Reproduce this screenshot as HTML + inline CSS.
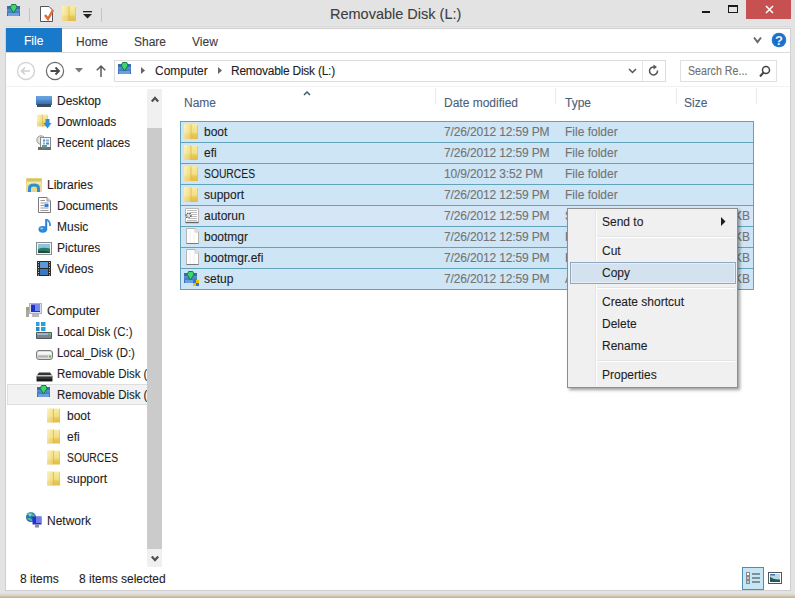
<!DOCTYPE html>
<html><head><meta charset="utf-8">
<style>
*{margin:0;padding:0;box-sizing:border-box}
html,body{-webkit-text-stroke:0.1px;width:795px;height:598px;overflow:hidden;background:#e3e3e3;font-family:"Liberation Sans",sans-serif;font-size:12px;color:#1e1e1e}
.a{position:absolute;white-space:nowrap}
svg.a{overflow:visible}
.t{position:absolute;white-space:nowrap;line-height:14px}
.sel{position:absolute;left:180px;width:574px;height:22px;background:#cde5f5;border:1px solid #62a3bb}
.g{color:#737373}
.h{color:#4c607a}
.nav{position:absolute;white-space:nowrap;line-height:14px;color:#1e1e1e}
.mi{position:absolute;left:602px;line-height:14px;color:#1e1e1e}
</style></head><body>
<svg width="0" height="0" style="position:absolute">
<defs>
<linearGradient id="fg1" x1="0" x2="0" y1="0" y2="1"><stop offset="0" stop-color="#f7eca0"/><stop offset=".55" stop-color="#f2de84"/><stop offset=".7" stop-color="#e8c958"/><stop offset="1" stop-color="#e2bd48"/></linearGradient>
<linearGradient id="fg2" x1="0" x2="1" y1="0" y2="0"><stop offset="0" stop-color="#fffbe0"/><stop offset="1" stop-color="#f0d878"/></linearGradient>
<linearGradient id="bl" x1="0" x2="0" y1="0" y2="1"><stop offset="0" stop-color="#6aa6e0"/><stop offset="1" stop-color="#2f68b8"/></linearGradient>
<symbol id="folder" viewBox="0 0 14 15">
  <rect x="0" y="0" width="14" height="15" fill="url(#fg1)"/>
  <rect x="0" y="0" width="7" height="15" fill="url(#fg2)" opacity=".5"/>
  <rect x="6.5" y="0.5" width="1" height="14.5" fill="#d8b850" opacity=".8"/>
  <rect x="13" y="1" width="1" height="14" fill="#e0c060" opacity=".7"/>
</symbol>
<symbol id="drvL" viewBox="0 0 14 13">
  <rect x="0" y="2" width="13" height="10" fill="url(#bl)"/>
  <rect x="0" y="2" width="13" height="3" fill="#3a6cb0"/>
  <rect x="1" y="9" width="11" height="3" fill="#6aa0e0"/>
  <path d="M3.2 3.5L6.5 9L10 3.5L8.8 0.5H4.6Z" fill="#3ad86c" stroke="#1a6a3c" stroke-width="0.9"/>
</symbol>
<symbol id="page" viewBox="0 0 14 16">
  <path d="M1.5 0.5H10L13.5 4V15.5H1.5Z" fill="#fff" stroke="#b4b4b4"/>
  <path d="M10 0.5V4H13.5" fill="#f0f0f0" stroke="#c8c8c8"/>
  <path d="M1.5 15.5H13.5" stroke="#7a7a7a"/>
  <path d="M5 2V15M9 2V15" stroke="#f4eeee"/>
</symbol>
</defs>
</svg>

<!-- title bar -->
<svg class="a" style="left:7px;top:4px" width="14" height="13"><use href="#drvL"/></svg>
<div class="a" style="left:29px;top:8px;width:1px;height:14px;background:#c4c4c4"></div>
<svg class="a" style="left:40px;top:6px" width="15" height="16"><path d="M0.5 0.5H9L12.5 4V15.5H0.5Z" fill="#fff" stroke="#555"/><path d="M5 9 L8 13 L13 4" stroke="#e06a3a" stroke-width="2.5" fill="none"/></svg>
<svg class="a" style="left:62px;top:5px" width="14" height="17"><use href="#folder" width="14" height="17"/></svg>
<svg class="a" style="left:83px;top:11px" width="9" height="8"><rect x="0" y="0" width="9" height="1.3" fill="#222"/><path d="M0 3H9L4.5 7.5Z" fill="#222"/></svg>
<div class="a" style="left:101px;top:8px;width:1px;height:14px;background:#c4c4c4"></div>

<div class="a" style="left:330px;top:5px;font-size:14.5px;color:#3d3d3d;line-height:18px">Removable Disk (L:)</div>
<!-- window buttons -->
<div class="a" style="left:702px;top:11px;width:8px;height:2px;background:#1a1a1a"></div>
<div class="a" style="left:728px;top:5px;width:10px;height:8px;border:1px solid #1a1a1a;border-top-width:2px"></div>
<div class="a" style="left:746px;top:0;width:45px;height:19px;background:#c75050"></div>
<svg class="a" style="left:765px;top:5px" width="9" height="9"><path d="M1 1L8 8M8 1L1 8" stroke="#fff" stroke-width="1.5"/></svg>

<!-- white window content -->
<div class="a" style="left:5px;top:26px;width:786px;height:1px;background:#d8d8d8"></div>
<div class="a" style="left:5px;top:25px;width:786px;height:1px;background:#e6e6e6"></div>
<div class="a" style="left:5px;top:27px;width:786px;height:1px;background:#e8e8e8"></div>
<div class="a" style="left:5px;top:28px;width:786px;height:563px;background:#fff;border:1px solid #cfcfcf"></div>

<!-- ribbon tabs -->
<div class="a" style="left:6px;top:28px;width:56px;height:24px;background:#1979ca"></div>
<div class="t" style="left:24px;top:34px;color:#fff">File</div>
<div class="t" style="left:76px;top:35px;color:#3c3c3c">Home</div>
<div class="t" style="left:134px;top:35px;color:#3c3c3c">Share</div>
<div class="t" style="left:192px;top:35px;color:#3c3c3c">View</div>
<div class="a" style="left:6px;top:52px;width:785px;height:1px;background:#dadbdc"></div>
<svg class="a" style="left:753px;top:36px" width="9" height="8"><path d="M1 1.5L4.5 6L8 1.5" stroke="#6a6a6a" stroke-width="2" fill="none"/></svg>
<svg class="a" style="left:771px;top:32px" width="16" height="16"><circle cx="8" cy="8" r="7.3" fill="#1c6cc4"/><circle cx="8" cy="8" r="6.3" fill="none" stroke="#2a80d8" stroke-width="1"/><text x="8" y="12.8" font-size="13" font-weight="bold" text-anchor="middle" fill="#e8f4ff" font-family="Liberation Sans">?</text></svg>

<!-- address bar -->
<svg class="a" style="left:16px;top:61px" width="20" height="20"><circle cx="10" cy="10" r="8.5" fill="none" stroke="#d4d4d4" stroke-width="1.4"/><path d="M14 10H6M9 6.5L5.5 10L9 13.5" stroke="#d0d0d0" stroke-width="1.6" fill="none"/></svg>
<svg class="a" style="left:45px;top:61px" width="20" height="20"><circle cx="10" cy="10" r="8.6" fill="none" stroke="#6a6a6a" stroke-width="1.2"/><path d="M5.5 10H13.5M10.5 6.5L14 10L10.5 13.5" stroke="#4a4a4a" stroke-width="1.8" fill="none"/></svg>
<svg class="a" style="left:75px;top:68px" width="8" height="5"><path d="M0 0H8L4 4.5Z" fill="#777"/></svg>
<svg class="a" style="left:95px;top:64px" width="12" height="14"><path d="M6 13V2M1.8 6.2L6 2L10.2 6.2" stroke="#5a5a5a" stroke-width="1.5" fill="none"/></svg>
<div class="a" style="left:114px;top:60px;width:552px;height:22px;border:1px solid #dcdcdc"></div>
<svg class="a" style="left:118px;top:62px" width="14" height="13"><use href="#drvL"/></svg>
<svg class="a" style="left:141px;top:67px" width="4" height="7"><path d="M0 0L4 3.5L0 7Z" fill="#666"/></svg>
<div class="t" style="left:155px;top:64px">Computer</div>
<svg class="a" style="left:218px;top:67px" width="4" height="7"><path d="M0 0L4 3.5L0 7Z" fill="#666"/></svg>
<div class="t" style="left:231px;top:64px;letter-spacing:-0.25px">Removable Disk (L:)</div>
<svg class="a" style="left:628px;top:68px" width="9" height="6"><path d="M1 1L4.5 4.5L8 1" stroke="#555" stroke-width="1.5" fill="none"/></svg>
<div class="a" style="left:642px;top:61px;width:1px;height:20px;background:#e6e6e6"></div>
<svg class="a" style="left:648px;top:64px" width="12" height="14"><path d="M9.5 6.5A4 4 0 1 1 6 3" stroke="#555" stroke-width="1.5" fill="none"/><path d="M5.5 0.5L9 3L5.5 5.5Z" fill="#555"/></svg>
<div class="a" style="left:680px;top:60px;width:97px;height:22px;border:1px solid #e0e0e0"></div>
<div class="t" style="left:688px;top:64px;color:#707070;transform:scaleX(0.89);transform-origin:0 0">Search Re...</div>
<svg class="a" style="left:759px;top:65px" width="12" height="13"><circle cx="7" cy="5" r="3.5" fill="none" stroke="#444" stroke-width="1.5"/><path d="M4.5 7.5L1 11.5" stroke="#444" stroke-width="2"/></svg>

<!-- header -->
<div class="t h" style="left:184px;top:96px">Name</div>
<svg class="a" style="left:303px;top:90px" width="8" height="6"><path d="M1 5L4 2L7 5" stroke="#3f5866" stroke-width="1.5" fill="none"/></svg>
<div class="a" style="left:6px;top:86px;width:784px;height:1px;background:#f2f2f2"></div>
<div class="a" style="left:435px;top:88px;width:1px;height:16px;background:#ebebeb"></div>
<div class="t h" style="left:444px;top:96px">Date modified</div>
<div class="a" style="left:555px;top:88px;width:1px;height:16px;background:#ebebeb"></div>
<div class="t h" style="left:565px;top:96px">Type</div>
<div class="a" style="left:676px;top:88px;width:1px;height:16px;background:#ebebeb"></div>
<div class="t h" style="left:684px;top:96px">Size</div>
<div class="a" style="left:756px;top:88px;width:1px;height:16px;background:#ebebeb"></div>

<!-- rows -->
<div class="sel" style="top:121px"></div>
<div class="sel" style="top:142px"></div>
<div class="sel" style="top:163px"></div>
<div class="sel" style="top:184px"></div>
<div class="sel" style="top:205px;background:#d5e6f7"></div>
<div class="sel" style="top:226px"></div>
<div class="sel" style="top:247px"></div>
<div class="sel" style="top:268px"></div>

<svg class="a" style="left:184px;top:124px" width="14" height="15"><use href="#folder"/></svg>
<svg class="a" style="left:184px;top:145px" width="14" height="15"><use href="#folder"/></svg>
<svg class="a" style="left:184px;top:166px" width="14" height="15"><use href="#folder"/></svg>
<svg class="a" style="left:184px;top:187px" width="14" height="15"><use href="#folder"/></svg>
<svg class="a" style="left:184px;top:208px" width="16" height="16"><path d="M1.5 0.5H14.5V14.5H1.5Z" fill="#fff" stroke="#b8b8b8"/><path d="M3 2.5H13M6 4.5H13M7 6.5H13M7 8.5H13M6 10.5H13M3 12.5H13" stroke="#bcbcbc"/><path d="M1.5 14.5H14.5" stroke="#666" stroke-width="1.4"/><circle cx="4.5" cy="7.5" r="2.4" fill="#ddd" stroke="#555" stroke-width="1.4" stroke-dasharray="1.3 0.9"/></svg>
<svg class="a" style="left:185px;top:228px" width="14" height="16"><use href="#page"/></svg>
<svg class="a" style="left:185px;top:249px" width="14" height="16"><use href="#page"/></svg>
<svg class="a" style="left:184px;top:270px" width="15" height="16"><use href="#drvL" width="14" height="13" y="1"/><rect x="9" y="10" width="6" height="6" fill="#f0c000"/><rect x="9" y="10" width="3" height="3" fill="#2a7ad0"/><rect x="12" y="13" width="3" height="3" fill="#2a7ad0"/></svg>

<div class="t" style="left:204px;top:125px">boot</div>
<div class="t" style="left:204px;top:146px">efi</div>
<div class="t" style="left:204px;top:167px;transform:scaleX(0.86);transform-origin:0 0">SOURCES</div>
<div class="t" style="left:204px;top:188px">support</div>
<div class="t" style="left:204px;top:209px">autorun</div>
<div class="t" style="left:204px;top:230px">bootmgr</div>
<div class="t" style="left:204px;top:251px">bootmgr.efi</div>
<div class="t" style="left:204px;top:272px">setup</div>

<div class="t g" style="left:444px;top:125px;letter-spacing:-0.15px">7/26/2012 12:59 PM</div>
<div class="t g" style="left:444px;top:146px;letter-spacing:-0.15px">7/26/2012 12:59 PM</div>
<div class="t g" style="left:444px;top:167px;letter-spacing:-0.15px">10/9/2012 3:52 PM</div>
<div class="t g" style="left:444px;top:188px;letter-spacing:-0.15px">7/26/2012 12:59 PM</div>
<div class="t g" style="left:444px;top:209px;letter-spacing:-0.15px">7/26/2012 12:59 PM</div>
<div class="t g" style="left:444px;top:230px;letter-spacing:-0.15px">7/26/2012 12:59 PM</div>
<div class="t g" style="left:444px;top:251px;letter-spacing:-0.15px">7/26/2012 12:59 PM</div>
<div class="t g" style="left:444px;top:272px;letter-spacing:-0.15px">7/26/2012 12:59 PM</div>

<div class="t g" style="left:565px;top:125px">File folder</div>
<div class="t g" style="left:565px;top:146px">File folder</div>
<div class="t g" style="left:565px;top:167px">File folder</div>
<div class="t g" style="left:565px;top:188px">File folder</div>
<div class="t g" style="left:565px;top:209px">S</div>
<div class="t g" style="left:565px;top:230px">F</div>
<div class="t g" style="left:565px;top:251px">E</div>
<div class="t g" style="left:565px;top:272px">A</div>
<div class="t g" style="left:734px;top:209px">KB</div>
<div class="t g" style="left:734px;top:230px">KB</div>
<div class="t g" style="left:734px;top:251px">KB</div>
<div class="t g" style="left:734px;top:272px">KB</div>

<!-- nav pane -->
<div class="a" style="left:6px;top:88px;width:141px;height:480px;overflow:hidden">
<div class="a" style="left:1px;top:296px;width:150px;height:21px;background:#f2f2f2;border:1px solid #dedede"></div>
<div class="nav" style="left:51px;top:6px">Desktop</div>
<div class="nav" style="left:51px;top:27px">Downloads</div>
<div class="nav" style="left:51px;top:48px;transform:scaleX(0.96);transform-origin:0 0">Recent places</div>
<div class="nav" style="left:41px;top:90px">Libraries</div>
<div class="nav" style="left:51px;top:111px">Documents</div>
<div class="nav" style="left:51px;top:132px">Music</div>
<div class="nav" style="left:51px;top:153px">Pictures</div>
<div class="nav" style="left:51px;top:174px">Videos</div>
<div class="nav" style="left:41px;top:216px">Computer</div>
<div class="nav" style="left:51px;top:237px;transform:scaleX(0.96);transform-origin:0 0">Local Disk (C:)</div>
<div class="nav" style="left:51px;top:258px;transform:scaleX(0.95);transform-origin:0 0">Local_Disk (D:)</div>
<div class="nav" style="left:51px;top:279px;transform:scaleX(0.955);transform-origin:0 0">Removable Disk (L:)</div>
<div class="nav" style="left:51px;top:300px;transform:scaleX(0.955);transform-origin:0 0">Removable Disk (L:)</div>
<div class="nav" style="left:61px;top:321px">boot</div>
<div class="nav" style="left:61px;top:342px">efi</div>
<div class="nav" style="left:61px;top:363px;transform:scaleX(0.86);transform-origin:0 0">SOURCES</div>
<div class="nav" style="left:61px;top:384px">support</div>
<div class="nav" style="left:41px;top:426px">Network</div>
</div>
<!-- nav icons -->
<svg class="a" style="left:36px;top:96px" width="16" height="12"><rect x="0" y="0" width="16" height="9" fill="url(#bl)"/><rect x="1" y="1" width="14" height="3" fill="#6f9fe0" opacity=".6"/><rect x="1" y="8" width="14" height="3" fill="#3e4b5c"/></svg>
<svg class="a" style="left:37px;top:112px" width="15" height="17"><use href="#folder" width="11" height="17"/><path d="M8.5 7H12.5V11H14.5L10.5 16.5L6.5 11H8.5Z" fill="#2e8de0"/></svg>
<svg class="a" style="left:36px;top:135px" width="16" height="15"><circle cx="5" cy="5" r="4.2" fill="#e4e4e4" stroke="#999"/><path d="M5 2.5V5H7" stroke="#777" fill="none"/><rect x="4.5" y="2.5" width="10" height="10" fill="#f7f7f7" stroke="#8a8a8a"/><rect x="7" y="4.5" width="2" height="2" fill="#4a8ed8"/><rect x="10" y="4.5" width="3" height="2" fill="#7fb0e0"/><rect x="7" y="7.5" width="2" height="2" fill="#7fb0e0"/><rect x="10" y="7.5" width="3" height="2" fill="#4a8ed8"/><rect x="2" y="12" width="13" height="3" fill="#6e6e6e"/><rect x="6" y="10" width="5" height="2.5" fill="#5aa08a"/></svg>
<svg class="a" style="left:26px;top:177px" width="16" height="15"><rect x="0" y="1" width="16" height="14" fill="#e6d27c"/><rect x="1" y="2" width="14" height="2" fill="#c8c870"/><rect x="1" y="5" width="14" height="2" fill="#f5e9a8"/><rect x="0" y="7" width="16" height="8" fill="#f0dc8a"/><path d="M3.5 15V11.5Q3.5 8 8 8Q12.5 8 12.5 11.5V15" stroke="#2c8ed8" stroke-width="3" fill="none"/><rect x="6" y="11" width="4" height="4" fill="#e9d889"/></svg>
<svg class="a" style="left:38px;top:197px" width="13" height="16"><path d="M0.5 0.5H9L12.5 4V15.5H0.5Z" fill="#fff" stroke="#7a7a7a"/><path d="M9 0.5V4H12.5" fill="#ddd" stroke="#999"/><path d="M2.5 3.5H7M2.5 6H10.5M2.5 8.5H6M2.5 11H10.5M2.5 13.5H10.5" stroke="#9a9a9a"/><rect x="6.5" y="7" width="4" height="3" fill="#3a7bc8"/></svg>
<svg class="a" style="left:38px;top:218px" width="13" height="15"><path d="M8.2 1V11.5" stroke="#2b7fd6" stroke-width="2"/><path d="M8.5 1.5Q12.5 3.5 12 8" stroke="#3a92e0" stroke-width="1.8" fill="none"/><ellipse cx="4.8" cy="11.3" rx="4.3" ry="3.4" fill="#2b86dc"/><ellipse cx="3.8" cy="10.5" rx="1.6" ry="1.1" fill="#8cc8f4"/></svg>
<svg class="a" style="left:36px;top:242px" width="16" height="13"><rect x="0.5" y="0.5" width="15" height="12" fill="#f4f4f4" stroke="#8a8a8a"/><rect x="2" y="2" width="12" height="9" fill="#8cc4dc"/><path d="M2 7Q7 5 14 6.5V11H2Z" fill="#2e7a66"/><path d="M2 9Q8 8 14 10V11H2Z" fill="#1c4c40"/></svg>
<svg class="a" style="left:37px;top:261px" width="14" height="15"><rect x="0" y="0" width="14" height="15" fill="#2a2a2a"/><rect x="3" y="1" width="8" height="6" fill="#5a9ad8"/><rect x="3" y="8" width="8" height="6" fill="#3a78c0"/><path d="M1.5 1V15M12.5 1V15" stroke="#d8d8d8" stroke-dasharray="1 1.5"/></svg>
<svg class="a" style="left:25px;top:303px" width="18" height="15"><rect x="4.5" y="0.5" width="12" height="10" fill="#e0dff0" stroke="#b0b0c0"/><rect x="6" y="1.5" width="9" height="7.5" fill="#2030c8"/><rect x="10" y="2" width="5" height="6" fill="#6f8cf0"/><rect x="7" y="11" width="7" height="3" fill="#b8b8c0"/><rect x="1" y="4" width="3" height="10" fill="#a8a8a8"/><rect x="1" y="4" width="3" height="3" fill="#8cae5c"/></svg>
<svg class="a" style="left:36px;top:322px" width="17" height="17"><rect x="0" y="0" width="3.5" height="4" fill="#28a2de"/><rect x="5" y="0" width="4.5" height="4" fill="#28a2de"/><rect x="0" y="5" width="3.5" height="4" fill="#1e8cc6"/><rect x="5" y="5" width="4.5" height="4" fill="#28a2de"/><rect x="0" y="10" width="16" height="7" rx="1" fill="#50565c"/><rect x="1" y="11" width="14" height="2.5" fill="#9fb4cc"/><rect x="1" y="14" width="14" height="2" fill="#7d858c"/><rect x="12" y="11.5" width="2" height="1.5" fill="#4cae4c"/></svg>
<svg class="a" style="left:36px;top:350px" width="17" height="10"><rect x="0.5" y="0.5" width="16" height="9" rx="2.5" fill="#dcdcdc" stroke="#7a7a7a"/><rect x="2" y="2" width="13" height="2.5" fill="#f8f8f8"/><rect x="2" y="5.5" width="10" height="2" fill="#b0b0b0"/><rect x="13" y="5.5" width="2" height="2" fill="#5cb82c"/></svg>
<svg class="a" style="left:36px;top:372px" width="17" height="10"><path d="M3 0.5H14L16.5 4V9.5H0.5V4Z" fill="#333"/><rect x="1" y="3" width="15" height="1.5" fill="#c8c8c8"/><rect x="1" y="7" width="15" height="2" fill="#1a1a1a"/></svg>
<svg class="a" style="left:37px;top:385px" width="14" height="13"><use href="#drvL"/></svg>
<svg class="a" style="left:47px;top:408px" width="13" height="15"><use href="#folder" width="13" height="15"/></svg>
<svg class="a" style="left:47px;top:429px" width="13" height="15"><use href="#folder" width="13" height="15"/></svg>
<svg class="a" style="left:47px;top:450px" width="13" height="15"><use href="#folder" width="13" height="15"/></svg>
<svg class="a" style="left:47px;top:471px" width="13" height="15"><use href="#folder" width="13" height="15"/></svg>
<svg class="a" style="left:25px;top:511px" width="18" height="17"><circle cx="6" cy="6.2" r="5" fill="#2a68c8"/><path d="M2 3.5Q4.5 1.5 7 3.5T9.5 6M2.5 8Q5 7 7 10" stroke="#52c070" stroke-width="2" fill="none"/><circle cx="5" cy="4" r="1.5" fill="#8de0f0" opacity=".8"/><rect x="7.5" y="5.5" width="9" height="8" fill="#2430c8"/><rect x="11" y="6" width="5" height="6" fill="#6a7cf0"/><rect x="10" y="13.5" width="4" height="3" fill="#8a8a98"/></svg>

<!-- scrollbar -->
<div class="a" style="left:147px;top:89px;width:15px;height:478px;background:#f0f0f0"></div>
<div class="a" style="left:147px;top:128px;width:15px;height:421px;background:#cbcbcb"></div>
<svg class="a" style="left:151px;top:96px" width="8" height="7"><path d="M0.8 5.5L4 2L7.2 5.5" stroke="#505050" stroke-width="2.2" fill="none"/></svg>
<svg class="a" style="left:151px;top:555px" width="8" height="7"><path d="M0.8 1.5L4 5L7.2 1.5" stroke="#505050" stroke-width="2.2" fill="none"/></svg>

<!-- status -->
<div class="t" style="left:20px;top:572px">8 items</div>
<div class="t" style="left:79px;top:572px">8 items selected</div>
<div class="a" style="left:742px;top:567px;width:22px;height:23px;background:#c6e6f6;border:1px solid #4a8fb4"></div>
<svg class="a" style="left:745px;top:572px" width="16" height="13"><rect x="1.5" y="0.5" width="3" height="3" fill="#fff" stroke="#888"/><rect x="1.5" y="4.5" width="3" height="3" fill="#fff" stroke="#888"/><rect x="1.5" y="8.5" width="3" height="3" fill="#fff" stroke="#888"/><rect x="2.5" y="5.5" width="1" height="1" fill="#222"/><rect x="2.5" y="9.5" width="1" height="1" fill="#222"/><path d="M7 2H15M7 6H15M7 10H15" stroke="#3a3a3a" stroke-width="1.2"/></svg>
<svg class="a" style="left:768px;top:572px" width="14" height="12"><rect x="0.5" y="0.5" width="13" height="11" fill="#fff" stroke="#555"/><rect x="2" y="2" width="10" height="8" fill="#b8d8ea"/><rect x="2" y="2" width="5" height="1.5" fill="#3c78b8"/><path d="M2 4.5Q5 8 12 7.5V10H2Z" fill="#1e5a58"/></svg>
<!-- context menu -->
<div class="a" style="left:567px;top:208px;width:171px;height:180px;background:#f0f0f0;border:1px solid #8e8e8e;box-shadow:2px 2px 3px rgba(0,0,0,.38)"></div>
<div class="a" style="left:595px;top:210px;width:1px;height:176px;background:#e2e3e3"></div>
<div class="a" style="left:596px;top:210px;width:1px;height:176px;background:#fff"></div>
<div class="a" style="left:597px;top:236px;width:138px;height:1px;background:#e2e3e3"></div>
<div class="a" style="left:597px;top:237px;width:138px;height:1px;background:#fff"></div>
<div class="a" style="left:597px;top:287px;width:138px;height:1px;background:#e2e3e3"></div>
<div class="a" style="left:597px;top:288px;width:138px;height:1px;background:#fff"></div>
<div class="a" style="left:597px;top:360px;width:138px;height:1px;background:#e2e3e3"></div>
<div class="a" style="left:597px;top:361px;width:138px;height:1px;background:#fff"></div>
<div class="a" style="left:570px;top:262px;width:166px;height:22px;background:#d4e2f0;border:1px solid #90a9c2;box-shadow:inset 0 0 0 1px #e4eef8"></div>
<div class="mi" style="top:215px">Send to</div>
<svg class="a" style="left:721px;top:217px" width="5" height="9"><path d="M0 0L4.5 4.5L0 9Z" fill="#1e1e1e"/></svg>
<div class="mi" style="top:244px">Cut</div>
<div class="mi" style="top:266px">Copy</div>
<div class="mi" style="top:295px">Create shortcut</div>
<div class="mi" style="top:317px">Delete</div>
<div class="mi" style="top:339px">Rename</div>
<div class="mi" style="top:368px">Properties</div>

<!-- bottom taskbar edge -->
<div class="a" style="left:0;top:593px;width:795px;height:5px;background:linear-gradient(#e3e3e3,#ddd6c8 40%,#c2ae86)"></div>
</body></html>
